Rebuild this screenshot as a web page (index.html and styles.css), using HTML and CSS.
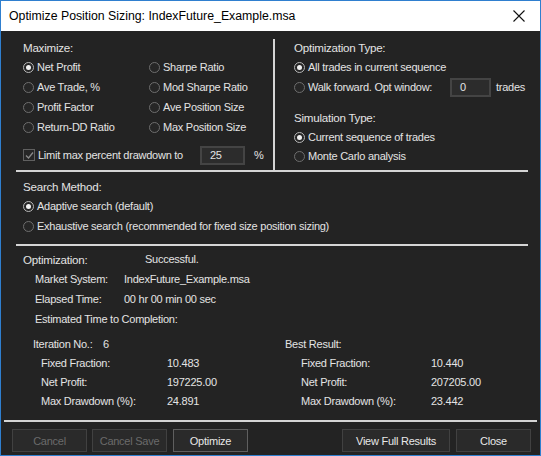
FILE: index.html
```html
<!DOCTYPE html>
<html lang="en">
<head>
    <meta charset="UTF-8">
    <title>Optimize Position Sizing</title>
    <link rel="stylesheet" href="styles.css">
</head>
<body>
<div class="window">
    <div class="titlebar">
        <span class="title">Optimize Position Sizing: IndexFuture_Example.msa</span>
        <svg class="close" width="12" height="12" viewBox="0 0 12 12">
            <path d="M0.5 0.5 L11.5 11.5 M11.5 0.5 L0.5 11.5" stroke="#111" stroke-width="1.1" fill="none"/>
        </svg>
    </div>

    <div class="content">
        <!-- top: maximize + optimization type -->
        <div class="top">
            <div class="col-left">
                <div class="row head">Maximize:</div>
                <div class="grid2">
                    <div class="row"><span class="radio on"></span>Net Profit</div>
                    <div class="row"><span class="radio"></span>Sharpe Ratio</div>
                    <div class="row"><span class="radio"></span>Ave Trade, %</div>
                    <div class="row"><span class="radio"></span>Mod Sharpe Ratio</div>
                    <div class="row"><span class="radio"></span>Profit Factor</div>
                    <div class="row"><span class="radio"></span>Ave Position Size</div>
                    <div class="row"><span class="radio"></span>Return-DD Ratio</div>
                    <div class="row"><span class="radio"></span>Max Position Size</div>
                </div>
                <div class="row limit">
                    <span class="check">
                        <svg width="9" height="9" viewBox="0 0 9 9"><path d="M1 4.5 L3.5 7 L8 1.5" stroke="#8a8a8a" stroke-width="1.3" fill="none"/></svg>
                    </span>
                    <span class="limit-label">Limit max percent drawdown to</span>
                    <span class="field pct-field">25</span>
                    <span class="pct">%</span>
                </div>
            </div>
            <div class="col-right">
                <div class="row head">Optimization Type:</div>
                <div class="row"><span class="radio on"></span>All trades in current sequence</div>
                <div class="row"><span class="radio"></span><span class="walk-label">Walk forward. Opt window:</span><span class="field win-field">0</span><span>trades</span></div>
                <div class="row head sim">Simulation Type:</div>
                <div class="row"><span class="radio on"></span>Current sequence of trades</div>
                <div class="row tight"><span class="radio"></span>Monte Carlo analysis</div>
            </div>
        </div>

        <div class="search">
            <div class="row head">Search Method:</div>
            <div class="row"><span class="radio on"></span>Adaptive search (default)</div>
            <div class="row"><span class="radio"></span>Exhaustive search (recommended for fixed size position sizing)</div>
        </div>

        <div class="status">
            <div class="row"><span class="st-label head">Optimization:</span><span>Successful.</span></div>
            <div class="row sub"><span class="sub-label">Market System:</span><span>IndexFuture_Example.msa</span></div>
            <div class="row sub"><span class="sub-label">Elapsed Time:</span><span>00 hr 00 min 00 sec</span></div>
            <div class="row sub">Estimated Time to Completion:</div>

            <div class="results">
                <div class="res-col">
                    <div class="rrow"><span class="iter-label">Iteration No.:</span><span>6</span></div>
                    <div class="rrow item"><span class="item-label">Fixed Fraction:</span><span>10.483</span></div>
                    <div class="rrow item"><span class="item-label">Net Profit:</span><span>197225.00</span></div>
                    <div class="rrow item"><span class="item-label">Max Drawdown (%):</span><span>24.891</span></div>
                </div>
                <div class="res-col best">
                    <div class="rrow">Best Result:</div>
                    <div class="rrow item"><span class="item-label">Fixed Fraction:</span><span>10.440</span></div>
                    <div class="rrow item"><span class="item-label">Net Profit:</span><span>207205.00</span></div>
                    <div class="rrow item"><span class="item-label">Max Drawdown (%):</span><span>23.442</span></div>
                </div>
            </div>
        </div>

        <div class="buttons">
            <button class="btn" disabled>Cancel</button>
            <button class="btn" disabled>Cancel Save</button>
            <button class="btn focus">Optimize</button>
            <span class="spacer"></span>
            <button class="btn wide-btn">View Full Results</button>
            <button class="btn">Close</button>
        </div>
    </div>
</div>
</body>
</html>
```

FILE: styles.css
```css
* {
    box-sizing: border-box;
}
body {
    margin: 0;
    padding: 0;
    background-color: #232323;
    font-family: "Liberation Sans", Arial, sans-serif;
    font-size: 11px;
    letter-spacing: -0.25px;
    color: #e4e4e4;
}
.window {
    width: 541px;
    height: 456px;
    border: 1px solid #2f7fcf;
    background-color: #232323;
    display: flex;
    flex-direction: column;
}
.titlebar {
    height: 30px;
    flex: none;
    background-color: #fff;
    display: flex;
    align-items: center;
    padding: 0 0 0 8px;
    color: #000;
    font-size: 12.3px;
    letter-spacing: 0;
}
.title {
    flex: 1;
}
.close {
    margin-right: 15px;
}
.content {
    flex: 1;
    display: flex;
    flex-direction: column;
}
.row {
    height: 20px;
    display: flex;
    align-items: center;
    white-space: nowrap;
}
.head {
    font-size: 11.6px;
}
.radio {
    width: 11px;
    height: 11px;
    border: 1px solid #6e6e6e;
    border-radius: 50%;
    background-color: #262626;
    margin-right: 3px;
    position: relative;
    flex: none;
}
.radio.on {
    border-color: #b8b8b8;
}
.radio.on::after {
    content: "";
    position: absolute;
    left: 2px;
    top: 2px;
    width: 5px;
    height: 5px;
    border-radius: 50%;
    background-color: #f2f2f2;
}
.check {
    width: 12px;
    height: 12px;
    border: 1px solid #606060;
    background-color: #262626;
    display: flex;
    align-items: center;
    justify-content: center;
    margin-right: 3px;
    flex: none;
}
.field {
    height: 19px;
    border: 2px solid #444;
    background-color: #2c2c2c;
    display: flex;
    align-items: center;
    padding-left: 8px;
}

/* top block */
.top {
    display: flex;
    border-bottom: 2px solid #d4d4d4;
    margin: 0 12px 0 15px;
    height: 141px;
    flex: none;
}
.col-left {
    width: 259px;
    padding-left: 7px;
    margin-top: 8px;
    border-right: 2px solid #d4d4d4;
}
.col-left > .head {
    margin-top: -2px;
}
.grid2 {
    display: grid;
    grid-template-columns: 126px 1fr;
}
.limit {
    margin-top: 8px;
}
.limit-label {
    width: 162px;
}
.pct-field {
    width: 45px;
}
.pct {
    margin-left: 9px;
}
.col-right {
    padding: 6px 0 0 19px;
}
.walk-label {
    width: 142px;
}
.win-field {
    width: 41px;
    margin-right: 5px;
}
.sim {
    margin-top: 10px;
}
.tight {
    margin-top: -1px;
}

/* search method */
.search {
    margin: 0 12px 0 15px;
    padding: 4px 0 0 7px;
    height: 74px;
    flex: none;
    border-bottom: 2px solid #d4d4d4;
}

/* status */
.status {
    margin: 0 3px;
    padding: 3px 0 0 19px;
    height: 176px;
    flex: none;
    border-bottom: 2px solid #d4d4d4;
}
.st-label {
    width: 122px;
}
.sub {
    padding-left: 12px;
}
.sub-label {
    width: 89px;
}
.results {
    display: flex;
    margin-top: 5px;
    padding-left: 10px;
}
.res-col {
    width: 252px;
}
.rrow {
    height: 19px;
    display: flex;
    align-items: center;
    white-space: nowrap;
}
.iter-label {
    width: 70px;
}
.item {
    padding-left: 8px;
}
.best .item {
    padding-left: 16px;
}
.item-label {
    width: 126px;
}
.best .item-label {
    width: 130px;
}

/* buttons */
.buttons {
    display: flex;
    padding: 7px 9px 0 11px;
    gap: 5px;
}
.spacer {
    flex: 1;
}
.btn {
    width: 75px;
    height: 23px;
    background-color: #2a2a2a;
    border: 1px solid #414141;
    color: #e8e8e8;
    font-family: "Liberation Sans", Arial, sans-serif;
    font-size: 11px;
    letter-spacing: -0.25px;
    padding: 0;
}
.btn:disabled {
    color: #6a6a6a;
}
.btn.focus {
    border-color: #5f5f5f;
    margin-left: 1px;
}
.wide-btn {
    width: 108px;
    margin-right: 1px;
}
```
